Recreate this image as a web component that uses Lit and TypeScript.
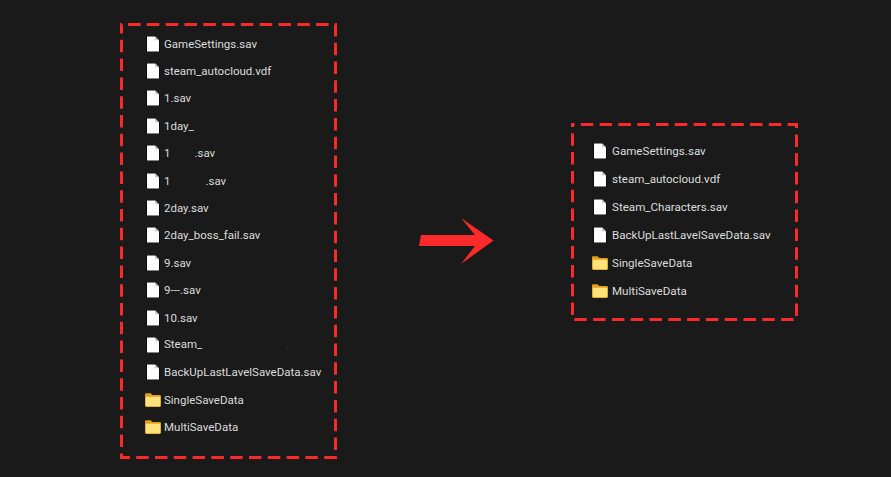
import { LitElement, html, css, svg } from "lit";
import { customElement, property } from "lit/decorators.js";

type Row = { name: string; kind: "file" | "folder"; gap?: number; tail?: string; specks?: boolean };

const fileIcon = html`<svg class="icon" viewBox="0 0 16 16" width="16" height="16" aria-hidden="true">
  <path d="M1 0H10.500L15 4.500V16H1Z" fill="#000" opacity=".6" />
  <path d="M2 .5H10.200L14 4.300V15.500H2Z" fill="#fdfdfd" />
  <path d="M10.200 .6V4.300H13.900Z" fill="#c4c4c4" />
</svg>`;

const folderIcon = html`<svg class="icon" viewBox="0 0 16 16" width="16" height="16" aria-hidden="true">
  <path d="M0 2.600C0 1.700.6 1.200 1.400 1.200H5.600L7.400 3H14.600C15.400 3 16 3.600 16 4.400V13.600C16 14.400 15.400 15 14.600 15H1.400C.6 15 0 14.400 0 13.600Z" fill="#e0a21c" />
  <path d="M.8 6C.8 5.200 1.300 4.800 2 4.800H14C14.700 4.800 15.200 5.200 15.200 6V13.200C15.200 13.800 14.800 14.200 14.200 14.200H1.800C1.200 14.200 .8 13.800 .8 13.200Z" fill="#ffe27c" />
</svg>`;

@customElement("file-panel")
class FilePanel extends LitElement {
  @property({ type: Array }) rows: Row[] = [];
  @property({ type: Number }) w = 0;
  @property({ type: Number }) h = 0;
  @property({ type: Number }) phase = 0;

  static styles = css`
    :host { display: block; position: relative; box-sizing: border-box; }
    .frame { position: absolute; inset: 0; overflow: visible; pointer-events: none; }
    .list { display: grid; grid-auto-rows: var(--row-h); }
    .row {
      display: grid;
      grid-template-columns: 16px 1fr;
      column-gap: var(--icon-gap);
      align-items: center;
      font-family: Roboto, "Noto Sans", sans-serif;
      font-size: var(--font-size);
      line-height: 16px;
      color: #dcdcdc;
      white-space: nowrap;
    }
    .icon { display: block; }
    .name { display: flex; align-items: baseline; }
    .specks { color: #555; font-size: 9px; margin-left: 84px; letter-spacing: 1px; }
  `;

  render() {
    const { w, h, phase } = this;
    return html`
      <div class="list">
        ${this.rows.map(
          (r) => html`<div class="row">
            ${r.kind === "file" ? fileIcon : folderIcon}
            <span class="name"
              ><span>${r.name}</span>${r.gap
                ? html`<span style="width:${r.gap}px"></span>`
                : ""}${r.tail ? html`<span>${r.tail}</span>` : ""}${r.specks
                ? html`<span class="specks">.</span>`
                : ""}</span
            >
          </div>`
        )}
      </div>
      <svg class="frame" width=${w} height=${h} viewBox="0 0 ${w} ${h}" aria-hidden="true">
        ${svg`<rect x="1.5" y="1.5" width=${w - 3} height=${h - 3} fill="none" stroke="#fb2a2a" stroke-width="3" stroke-dasharray="12.5 6.3" stroke-dashoffset=${phase} />`}
      </svg>
    `;
  }
}

const LEFT: Row[] = [
  { name: "GameSettings.sav", kind: "file" },
  { name: "steam_autocloud.vdf", kind: "file" },
  { name: "1.sav", kind: "file" },
  { name: "1day_", kind: "file" },
  { name: "1", kind: "file", gap: 24, tail: ".sav" },
  { name: "1", kind: "file", gap: 35, tail: ".sav" },
  { name: "2day.sav", kind: "file" },
  { name: "2day_boss_fail.sav", kind: "file" },
  { name: "9.sav", kind: "file" },
  { name: "9---.sav", kind: "file" },
  { name: "10.sav", kind: "file" },
  { name: "Steam_", kind: "file", specks: true },
  { name: "BackUpLastLavelSaveData.sav", kind: "file" },
  { name: "SingleSaveData", kind: "folder" },
  { name: "MultiSaveData", kind: "folder" },
];

const RIGHT: Row[] = [
  { name: "GameSettings.sav", kind: "file" },
  { name: "steam_autocloud.vdf", kind: "file" },
  { name: "Steam_Characters.sav", kind: "file" },
  { name: "BackUpLastLavelSaveData.sav", kind: "file" },
  { name: "SingleSaveData", kind: "folder" },
  { name: "MultiSaveData", kind: "folder" },
];

@customElement("app-root")
export class AppRoot extends LitElement {
  static styles = css`
    :host {
      display: flex;
      align-items: flex-start;
      width: 891px;
      height: 477px;
      background: #1a1a1a;
      overflow: hidden;
    }
    .left {
      width: 217px; height: 436px;
      margin: 23px 0 0 120px;
      padding: 7px 0 0 25px;
      box-sizing: border-box;
      --row-h: 27.4px;
      --icon-gap: 3px;
      --font-size: 11.5px;
    }
    .arrow { display: block; margin: 218px 0 0 82px; }
    .right {
      width: 227px; height: 198px;
      margin: 123px 0 0 76px;
      padding: 14px 0 0 21px;
      box-sizing: border-box;
      --row-h: 28px;
      --icon-gap: 4px;
      --font-size: 11.6px;
    }
  `;

  render() {
    return html`
      <file-panel class="left" .rows=${LEFT} .w=${217} .h=${436} .phase=${12.2}></file-panel>
      <svg class="arrow" width="76" height="46" viewBox="0 0 76 46" aria-hidden="true">
        <path d="M2 17L56 17L42 0L74.500 22.500L42 46L56 28L0 28Z" fill="#fb2a2a" />
      </svg>
      <file-panel class="right" .rows=${RIGHT} .w=${227} .h=${198} .phase=${10.5}></file-panel>
    `;
  }
}
